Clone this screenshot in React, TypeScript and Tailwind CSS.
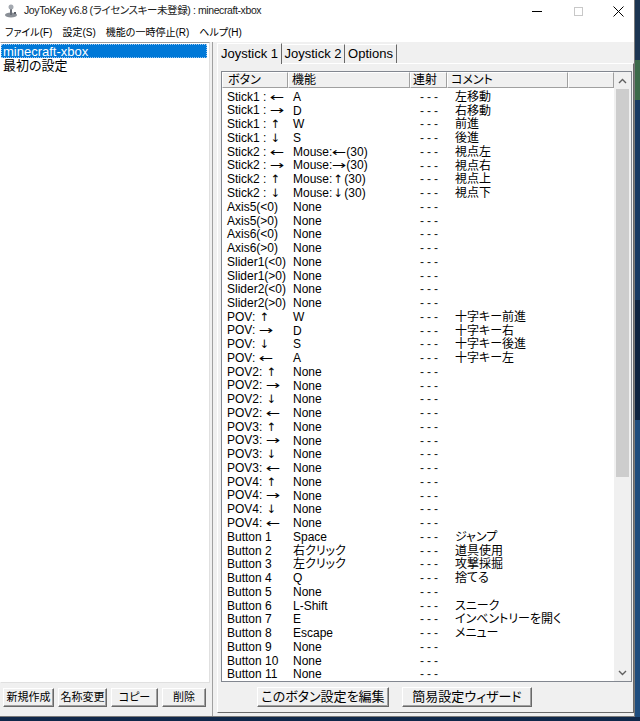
import React from 'react';

const ROWS: [string, string, string][] = [
  ['Stick1 : ←', 'A', '左移動'],
  ['Stick1 : →', 'D', '右移動'],
  ['Stick1 : ↑', 'W', '前進'],
  ['Stick1 : ↓', 'S', '後進'],
  ['Stick2 : ←', 'Mouse:←(30)', '視点左'],
  ['Stick2 : →', 'Mouse:→(30)', '視点右'],
  ['Stick2 : ↑', 'Mouse:↑(30)', '視点上'],
  ['Stick2 : ↓', 'Mouse:↓(30)', '視点下'],
  ['Axis5(<0)', 'None', ''],
  ['Axis5(>0)', 'None', ''],
  ['Axis6(<0)', 'None', ''],
  ['Axis6(>0)', 'None', ''],
  ['Slider1(<0)', 'None', ''],
  ['Slider1(>0)', 'None', ''],
  ['Slider2(<0)', 'None', ''],
  ['Slider2(>0)', 'None', ''],
  ['POV: ↑', 'W', '十字キー前進'],
  ['POV: →', 'D', '十字キー右'],
  ['POV: ↓', 'S', '十字キー後進'],
  ['POV: ←', 'A', '十字キー左'],
  ['POV2: ↑', 'None', ''],
  ['POV2: →', 'None', ''],
  ['POV2: ↓', 'None', ''],
  ['POV2: ←', 'None', ''],
  ['POV3: ↑', 'None', ''],
  ['POV3: →', 'None', ''],
  ['POV3: ↓', 'None', ''],
  ['POV3: ←', 'None', ''],
  ['POV4: ↑', 'None', ''],
  ['POV4: →', 'None', ''],
  ['POV4: ↓', 'None', ''],
  ['POV4: ←', 'None', ''],
  ['Button 1', 'Space', 'ジャンプ'],
  ['Button 2', '右クリック', '道具使用'],
  ['Button 3', '左クリック', '攻撃採掘'],
  ['Button 4', 'Q', '捨てる'],
  ['Button 5', 'None', ''],
  ['Button 6', 'L-Shift', 'スニーク'],
  ['Button 7', 'E', 'インベントリーを開く'],
  ['Button 8', 'Escape', 'メニュー'],
  ['Button 9', 'None', ''],
  ['Button 10', 'None', ''],
  ['Button 11', 'None', ''],
];

// arrows come out tiny in Liberation Sans; DejaVu ones, stretched a bit for ← →
function withArrows(s: string) {
  return s.split(/([←→↑↓])/).map((p, i) => {
    if (p === '←' || p === '→')
      return (
        <span key={i} className="inline-block w-[14px] text-center font-['DejaVu_Sans',sans-serif] text-[11.5px] scale-x-[1.5]">
          {p}
        </span>
      );
    if (p === '↑' || p === '↓')
      return (
        <span key={i} className="inline-block w-[12px] text-center font-['DejaVu_Sans',sans-serif] text-[11.5px]">
          {p}
        </span>
      );
    return p;
  });
}

// classic raised 3D button
const btn =
  'h-[19px] flex items-center justify-center whitespace-nowrap bg-[#f0f0f0] border border-t-white border-l-white border-r-[#696969] border-b-[#696969] shadow-[inset_-1px_-1px_0_#a0a0a0] text-black';

const headCell =
  'h-full flex items-center border border-t-white border-l-white border-r-[#a0a0a0] border-b-[#a0a0a0] bg-[#f0f0f0] text-[12px]';

const cell = 'h-[13.75px] flex items-center';

function AppIcon() {
  return (
    <svg width="14" height="14" viewBox="0 0 14 14">
      <ellipse cx="7" cy="11" rx="6" ry="2.5" fill="#8a8f96" />
      <rect x="6" y="3" width="2" height="8" fill="#6b7079" />
      <circle cx="7" cy="3" r="2.5" fill="#a4a9b0" />
      <rect x="10" y="8" width="2" height="2" fill="#5c6068" />
    </svg>
  );
}

export default function App() {
  return (
    <div className="w-[640px] h-[721px] flex bg-[#10284a] overflow-hidden font-['Liberation_Sans','Noto_Sans_CJK_JP',sans-serif] [font-feature-settings:'palt'] text-black">
      <div className="w-[635px] h-[717px] flex flex-col bg-[#f0f0f0] border-r border-b border-[#7a7a7a]">
        {/* title bar */}
        <div className="h-[22px] bg-white flex items-center shrink-0">
          <div className="ml-[4px] mr-[6px] flex items-center">
            <AppIcon />
          </div>
          <span className="text-[10.5px] text-[#1a1a1a] tracking-[-0.4px]">JoyToKey v6.8 (ライセンスキー未登録) : minecraft-xbox</span>
          <div className="ml-auto flex items-center h-full">
            <div className="w-[12px] flex items-center justify-center">
              <div className="w-[10px] h-px bg-black" />
            </div>
            <div className="w-[12px] ml-[29px] flex items-center justify-center">
              <div className="w-[9px] h-[9px] border border-[#c8c8c8]" />
            </div>
            <div className="w-[12px] ml-[28px] mr-[10px] flex items-center justify-center">
              <svg width="11" height="11" viewBox="0 0 11 11">
                <path d="M0.5 0.5L10.5 10.5M10.5 0.5L0.5 10.5" stroke="#000" strokeWidth="1" />
              </svg>
            </div>
          </div>
        </div>

        {/* menu bar */}
        <div className="h-[20px] bg-white flex items-center text-[10px] shrink-0">
          <span className="ml-[5px]">ファイル(F)</span>
          <span className="ml-[10px]">設定(S)</span>
          <span className="ml-[10px]">機能の一時停止(R)</span>
          <span className="ml-[10px]">ヘルプ(H)</span>
        </div>

        {/* body */}
        <div className="flex-1 flex">
          {/* left: profile list */}
          <div className="w-[210px] flex flex-col">
            <div className="h-[641px] bg-white border border-t-[#a0a0a0] border-r-[#e0e0e0] border-b-[#e0e0e0] border-l-transparent pt-[1px] text-[13px]">
              <div className="h-[14px] mr-[2px] bg-[#0078d7] text-white flex items-center pl-[2px] outline-dotted outline-1 outline-[#9cc7f0] -outline-offset-1 leading-none">
                minecraft-xbox
              </div>
              <div className="h-[15px] flex items-center pl-[2px] leading-none">最初の設定</div>
            </div>
            <div className="flex pl-[3px] gap-[4px] mt-[5px] text-[11px]">
              <div className={`${btn} w-[51px]`}>新規作成</div>
              <div className={`${btn} w-[49px]`}>名称変更</div>
              <div className={`${btn} w-[47px]`}>コピー</div>
              <div className={`${btn} w-[44px]`}>削除</div>
            </div>
          </div>

          {/* splitter */}
          <div className="w-[7px] flex">
            <div className="w-[2px]" />
            <div className="w-px bg-[#a0a0a0]" />
          </div>

          {/* right: tabs */}
          <div className="flex-1 flex flex-col">
            <div className="h-[21px] flex items-end text-[13px] shrink-0 relative z-10">
              <div className="w-[65px] h-[21px] -mb-px bg-[#f0f0f0] border border-b-0 border-t-white border-l-white border-r-[#696969] flex items-center justify-center pb-[1px]">
                Joystick 1
              </div>
              <div className="w-[63px] h-[19px] bg-[#f0f0f0] border border-b-0 border-t-white border-l-0 border-r-[#696969] flex items-center justify-center">
                Joystick 2
              </div>
              <div className="w-[52px] h-[19px] bg-[#f0f0f0] border border-b-0 border-t-white border-l-0 border-r-[#696969] flex items-center justify-center">
                Options
              </div>
            </div>

            <div className="h-[650px] border border-t-white border-l-white border-r-[#696969] border-b-[#696969] flex flex-col pl-[3px] pt-[7px]">
              {/* list view */}
              <div className="h-[611px] w-[411px] border border-[#828790] bg-white flex">
                <div className="flex-1 flex flex-col">
                  <div className="h-[16px] flex shrink-0">
                    <div className={`${headCell} w-[66px] pl-[5px]`}>ボタン</div>
                    <div className={`${headCell} w-[122px] pl-[3px]`}>機能</div>
                    <div className={`${headCell} w-[37px] pl-[2px]`}>連射</div>
                    <div className={`${headCell} w-[121px] pl-[3px]`}>コメント</div>
                    <div className={`${headCell} flex-1`} />
                  </div>
                  <div className="pt-[2px] text-[12px] leading-none">
                    {ROWS.map(([b, f, c], i) => (
                      <div key={i} className="flex h-[13.75px] whitespace-nowrap">
                        <div className={`${cell} w-[66px] pl-[5px]`}>
                          <span>{withArrows(b)}</span>
                        </div>
                        <div className={`${cell} w-[122px] pl-[5px]`}>
                          <span>{withArrows(f)}</span>
                        </div>
                        <div className={`${cell} w-[37px] pl-[10px] tracking-[3px] text-[#202020]`}>---</div>
                        <div className={`${cell} w-[121px] pl-[8px]`}>{c}</div>
                      </div>
                    ))}
                  </div>
                </div>
                {/* scrollbar */}
                <div className="w-[17px] bg-[#f0f0f0] flex flex-col">
                  <div className="h-[17px] flex items-center justify-center">
                    <svg width="9" height="6" viewBox="0 0 9 6">
                      <path d="M1 5L4.5 1.5L8 5" stroke="#606060" strokeWidth="1.4" fill="none" />
                    </svg>
                  </div>
                  <div className="flex-1 flex flex-col">
                    <div className="h-[388px] mx-[2px] bg-[#cdcdcd]" />
                  </div>
                  <div className="h-[17px] flex items-center justify-center">
                    <svg width="9" height="6" viewBox="0 0 9 6">
                      <path d="M1 1L4.5 4.5L8 1" stroke="#606060" strokeWidth="1.4" fill="none" />
                    </svg>
                  </div>
                </div>
              </div>

              {/* action buttons */}
              <div className="flex pl-[36px] gap-[13px] mt-[5px] text-[13px]">
                <div className={`${btn} w-[132px] h-[20px]`}>このボタン設定を編集</div>
                <div className={`${btn} w-[130px] h-[20px]`}>簡易設定ウィザード</div>
              </div>
            </div>
          </div>
        </div>
      </div>
      {/* desktop strip */}
      <div className="w-[5px] h-[717px] flex flex-col">
        <div className="h-[60px] bg-[#1c3552]" />
        <div className="h-[40px] bg-[#3c6a4a]" />
        <div className="h-[200px] bg-[#183a63]" />
        <div className="h-[120px] bg-[#0e2440]" />
        <div className="flex-1 bg-[#1f4d7e]" />
      </div>
    </div>
  );
}
